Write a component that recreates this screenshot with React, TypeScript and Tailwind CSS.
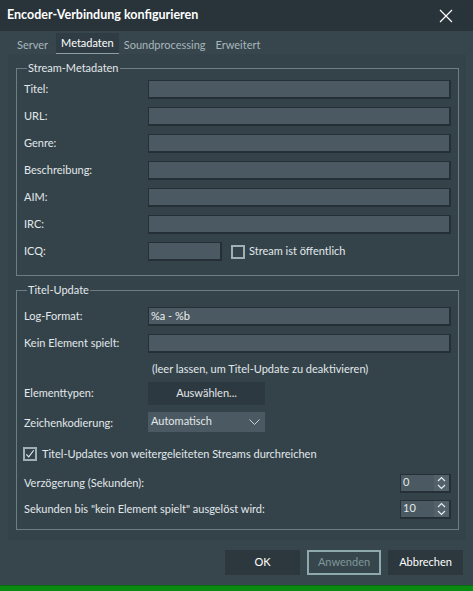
import React from "react";

const FONT = { fontFamily: '"Lato", "Open Sans", "Noto Sans", sans-serif' };

function TextInput({ value = "", className = "" }: { value?: string; className?: string }) {
  return (
    <div
      className={`h-[19px] bg-[#4b5a62] border border-[#243036] border-r-[2px] border-b-[2px] flex items-center px-[2px] text-[11px] text-[#eef2f3] ${className}`}
    >
      {value}
    </div>
  );
}

function Row({ label, children }: { label: string; children: React.ReactNode }) {
  return (
    <div className="flex items-center h-[19px]">
      <span className="w-[124px] shrink-0 text-[11px]">{label}</span>
      {children}
    </div>
  );
}

function Group({ title, className = "", children }: { title: string; className?: string; children: React.ReactNode }) {
  return (
    <div className={`relative border border-[#6c7d85] ml-[8px] mr-[7px] pl-[7px] pr-[7px] ${className}`}>
      <span className="absolute -top-[9px] left-[10px] px-[1px] bg-[#34434a] text-[11px] leading-[16px]">
        {title}
      </span>
      {children}
    </div>
  );
}

function CheckBox({ checked }: { checked?: boolean }) {
  return (
    <span className="w-[14px] h-[14px] border-[2px] border-[#9fb0b5] flex items-center justify-center shrink-0">
      {checked && (
        <svg width="12" height="12" viewBox="0 0 12 12">
          <path d="M1.5 6.5 L4.5 9.5 L10.5 1.5" fill="none" stroke="#dfe6e8" strokeWidth="1.4" />
        </svg>
      )}
    </span>
  );
}

function SpinBox({ value }: { value: string }) {
  return (
    <div className="w-[51px] h-[19px] bg-[#4b5a62] border border-[#243036] border-r-[2px] border-b-[2px] flex items-center justify-between pl-[2px] text-[11px]">
      <span>{value}</span>
      <span className="h-full w-[15px] bg-[#53626a] flex items-center justify-center">
        <svg width="9" height="14" viewBox="0 0 9 14">
          <path d="M1 5 L4.5 1.5 L8 5" fill="none" stroke="#e6ecee" strokeWidth="1.2" />
          <path d="M1 9 L4.5 12.5 L8 9" fill="none" stroke="#e6ecee" strokeWidth="1.2" />
        </svg>
      </span>
    </div>
  );
}

export default function App() {
  return (
    <div className="w-[473px] h-[591px] flex flex-col bg-[#37464d] text-[#e2e8ea] overflow-hidden" style={FONT}>
      {/* Title bar */}
      <div className="h-[31px] shrink-0 bg-[#28333a] flex items-center justify-between pl-[7px] pr-[20px]">
        <span className="text-[12.5px] font-bold text-white">Encoder-Verbindung konfigurieren</span>
        <svg width="14" height="14" viewBox="0 0 14 14">
          <path d="M1 1 L13 13 M13 1 L1 13" stroke="#ffffff" strokeWidth="1.2" />
        </svg>
      </div>

      {/* Tabs */}
      <div className="flex items-end h-[23px] pl-[13px] text-[11px] shrink-0">
        <span className="px-[4px] h-[19px] leading-[19px] text-[#a9b6bb]">Server</span>
        <span className="ml-[4px] px-[5px] h-[21px] leading-[20px] bg-[#2f3c43] border-b border-[#8ea0a6] text-white">Metadaten</span>
        <span className="px-[5px] h-[19px] leading-[19px] text-[#a9b6bb]">Soundprocessing</span>
        <span className="px-[5px] h-[19px] leading-[19px] text-[#a9b6bb]">Erweitert</span>
      </div>

      {/* Tab panel */}
      <div className="ml-[8px] w-[458px] h-[486px] bg-[#34434a] shrink-0 flex flex-col">
        <Group title="Stream-Metadaten" className="mt-[14px] h-[208px]">
          <div className="flex flex-col gap-[8px] pt-[11px]">
            <Row label="Titel:"><TextInput className="flex-1" /></Row>
            <Row label="URL:"><TextInput className="flex-1" /></Row>
            <Row label="Genre:"><TextInput className="flex-1" /></Row>
            <Row label="Beschreibung:"><TextInput className="flex-1" /></Row>
            <Row label="AIM:"><TextInput className="flex-1" /></Row>
            <Row label="IRC:"><TextInput className="flex-1" /></Row>
            <Row label="ICQ:">
              <TextInput className="w-[74px]" />
              <span className="ml-[9px] flex items-center gap-[4px] text-[11px]">
                <CheckBox />
                Stream ist öffentlich
              </span>
            </Row>
          </div>
        </Group>

        <Group title="Titel-Update" className="mt-[14px] h-[240px]">
          <div className="flex flex-col pt-[16px]">
            <Row label="Log-Format:"><TextInput className="flex-1" value="%a - %b" /></Row>
            <div className="mt-[8px]">
              <Row label="Kein Element spielt:"><TextInput className="flex-1" /></Row>
            </div>
            <div className="mt-[8px] h-[16px] pl-[128px] text-[11px] leading-[16px]">
              (leer lassen, um Titel-Update zu deaktivieren)
            </div>
            <div className="mt-[5px] flex items-center h-[23px]">
              <span className="w-[124px] text-[11px]">Elementtypen:</span>
              <div className="w-[117px] h-[23px] bg-[#2d3940] flex items-center justify-center text-[11px]">Auswählen...</div>
            </div>
            <div className="mt-[7px] flex items-center h-[20px]">
              <span className="w-[124px] text-[11px] pt-[2px]">Zeichenkodierung:</span>
              <div className="w-[117px] h-[20px] bg-[#4b5a62] flex items-center justify-between pl-[3px] pr-[5px] text-[11px]">
                <span className="-mt-[2px]">Automatisch</span>
                <svg width="11" height="7" viewBox="0 0 11 7">
                  <path d="M0.5 0.5 L5.5 5.5 L10.5 0.5" fill="none" stroke="#c9d3d6" strokeWidth="1" />
                </svg>
              </div>
            </div>
            <div className="mt-[14px] flex items-center gap-[5px] text-[11px] -ml-[1px]">
              <CheckBox checked />
              Titel-Updates von weitergeleiteten Streams durchreichen
            </div>
            <div className="mt-[11px] flex items-center justify-between h-[19px] text-[11px]">
              <span>Verzögerung (Sekunden):</span>
              <SpinBox value="0" />
            </div>
            <div className="mt-[7px] flex items-center justify-between h-[19px] text-[11px]">
              <span>Sekunden bis "kein Element spielt" ausgelöst wird:</span>
              <SpinBox value="10" />
            </div>
          </div>
        </Group>
      </div>

      {/* Buttons */}
      <div className="flex justify-end gap-[7px] pr-[10px] mt-[10px] text-[11px] shrink-0">
        <div className="w-[75px] h-[25px] bg-[#2c383e] flex items-center justify-center text-white">OK</div>
        <div className="w-[74px] h-[25px] border-[2px] border-[#8ea9a9] flex items-center justify-center text-[#7f9797]">Anwenden</div>
        <div className="w-[75px] h-[25px] bg-[#2c383e] flex items-center justify-center text-white">Abbrechen</div>
      </div>

      <div className="flex-1" />
      {/* Window behind (green strip) */}
      <div className="h-[6px] shrink-0 bg-[#0b8a12] border-t border-[#0a6a10] overflow-hidden pl-[18px]">
        <span className="block text-[14px] font-bold text-white leading-[18px] mt-[1px] tracking-[1px]">In Stream at Rock</span>
      </div>
    </div>
  );
}
